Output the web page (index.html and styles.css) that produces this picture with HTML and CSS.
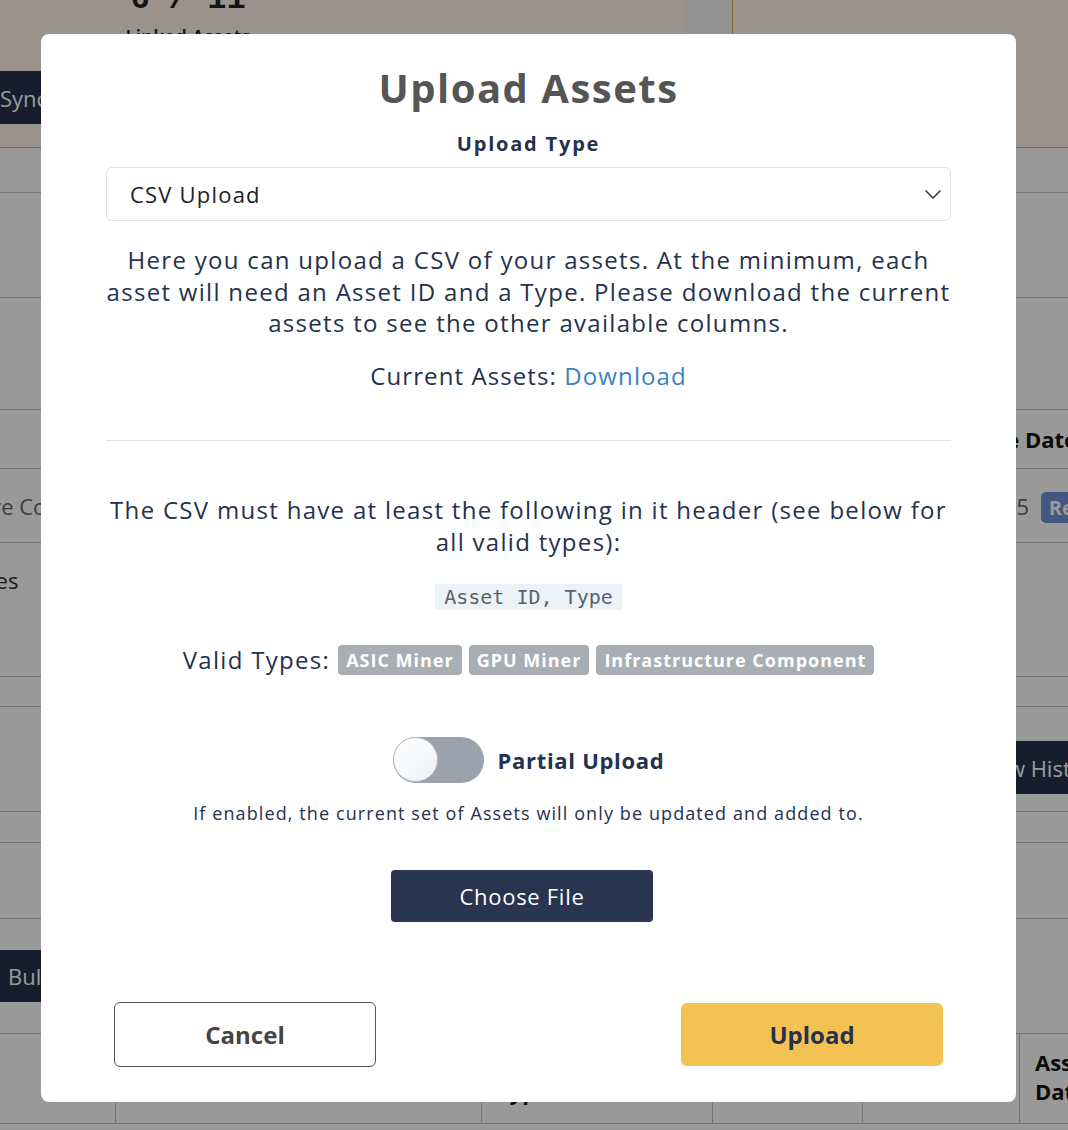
FILE: index.html
```html
<!DOCTYPE html>
<html lang="en">
<head>
  <meta charset="UTF-8">
  <meta name="viewport" content="width=device-width, initial-scale=1">
  <title>Assets - Upload</title>
  <link rel="stylesheet" href="styles.css">
</head>
<body>

  <!-- Page behind the modal -->
  <div class="page">
    <section class="summary">
      <div class="summary-left">
        <div class="stat">
          <div class="stat-value">6 / 11</div>
          <div class="stat-label">Linked Assets</div>
        </div>
        <button class="btn-dark btn-sync">Sync Assets</button>
      </div>
      <div class="summary-divider"></div>
      <div class="summary-right"></div>
    </section>

    <div class="rows">
      <div class="row h45"></div>
      <div class="row h105"></div>
      <div class="row h112"></div>
      <div class="row h59 head"><span class="cell-left"></span><span class="cell-right date-head">Due Date</span></div>
      <div class="row h74"><span class="cell-left muted shift-co">Hardware Component</span><span class="cell-right muted date-cell">2025 <span class="tag-blue">Ready</span></span></div>
      <div class="row h134 top"><span class="cell-left shift-es">Firmware Updates</span></div>
      <div class="row h30"></div>
      <div class="row h105"><span class="cell-left"></span><span class="cell-right"><button class="btn-dark btn-history">View History</button></span></div>
      <div class="row h31"></div>
      <div class="row h76"></div>
      <div class="row h115"><span class="cell-left"><button class="btn-dark btn-bulk">Bulk Edit</button></span></div>
      <div class="row table-head">
        <div class="col c1"></div>
        <div class="col c2">Asset ID</div>
        <div class="col c3">Asset<br>Type</div>
        <div class="col c4">Status</div>
        <div class="col c5">Location</div>
        <div class="col c6">Asset<br>Date</div>
      </div>
    </div>
  </div>

  <!-- Upload modal -->
  <div class="backdrop">
    <div class="modal">
      <h2 class="modal-title">Upload Assets</h2>

      <label class="field-label" for="uploadType">Upload Type</label>
      <div class="select" id="uploadType">
        <span>CSV Upload</span>
        <svg width="18" height="12" viewBox="0 0 18 12"><path d="M1.5 2.5 L9 10 L16.5 2.5" fill="none" stroke="#333" stroke-width="1.5"/></svg>
      </div>

      <p class="text intro">Here you can upload a CSV of your assets. At the minimum, each asset will need an Asset ID and a Type. Please download the current assets to see the other available columns.</p>
      <p class="text current">Current Assets: <a href="#" class="link">Download</a></p>

      <hr class="divider">

      <p class="text header-info">The CSV must have at least the following in it header (see below for all valid types):</p>
      <div class="code-line"><code>Asset ID, Type</code></div>

      <div class="types">
        <span class="text">Valid Types:</span>
        <span class="badge">ASIC Miner</span>
        <span class="badge">GPU Miner</span>
        <span class="badge">Infrastructure Component</span>
      </div>

      <div class="toggle-row">
        <span class="toggle"><span class="knob"></span></span>
        <span class="toggle-label">Partial Upload</span>
      </div>
      <p class="hint">If enabled, the current set of Assets will only be updated and added to.</p>

      <div class="file-row">
        <button class="btn-file">Choose File</button>
      </div>

      <div class="modal-footer">
        <button class="btn-cancel">Cancel</button>
        <button class="btn-upload">Upload</button>
      </div>
    </div>
  </div>

</body>
</html>
```

FILE: styles.css
```css
/* Global */
body {
  margin: 0;
  font-family: 'Open Sans', 'DejaVu Sans', sans-serif;
  background: #fff;
  color: #24314f;
  overflow: hidden;
}
button {
  font-family: inherit;
  cursor: pointer;
}

/* Page behind the modal */
.page {
  height: 1130px;
  overflow: hidden;
}
.summary {
  display: flex;
  height: 147px;
  background: #fff5ea;
  border-bottom: 1px solid #f0a03c;
}
.summary-left {
  width: 685px;
}
.stat {
  margin: -17px 0 0 116px;
  width: 144px;
  text-align: center;
}
.stat-value {
  font-family: 'Liberation Mono', monospace;
  font-weight: bold;
  font-size: 32px;
  line-height: 34px;
  color: #222;
}
.stat-label {
  margin-top: 5px;
  font-weight: 600;
  font-size: 19px;
  line-height: 30px;
  color: #222;
  white-space: nowrap;
}
.summary-divider {
  width: 47px;
  background: #f3f3f3;
  border-right: 1px solid #f0a03c;
}
.btn-dark {
  background: #25324e;
  color: #fff;
  border: none;
  border-radius: 4px;
  font-size: 22px;
  padding: 0 18px;
  height: 53px;
  white-space: nowrap;
}
.btn-sync {
  margin: 19px 0 0 -18px;
}
.rows .row {
  display: flex;
  justify-content: space-between;
  align-items: center;
  border-bottom: 1px solid #c4c4c4;
  font-size: 22px;
  color: #333;
  box-sizing: border-box;
}
.row.top {
  align-items: flex-start;
  padding-top: 22px;
}
.row.head {
  font-weight: bold;
  color: #111;
}
.h30 { height: 30px; }
.h31 { height: 31px; }
.h45 { height: 45px; }
.h59 { height: 59px; }
.h74 { height: 74px; }
.h76 { height: 76px; }
.h105 { height: 105px; }
.h112 { height: 112px; }
.h115 { height: 115px; }
.h134 { height: 134px; }
.cell-left {
  white-space: nowrap;
}
.cell-right {
  white-space: nowrap;
}
.shift-co {
  margin-left: -88px;
}
.shift-es {
  margin-left: -170px;
}
.date-head {
  margin-right: -9px;
}
.date-cell {
  margin-right: -50px;
}
.muted {
  color: #666;
}
.tag-blue {
  background: #6f8fd6;
  color: #fff;
  font-weight: bold;
  border-radius: 5px;
  padding: 2px 8px;
  font-size: 20px;
  margin-left: 6px;
}
.btn-history {
  margin: 17px -54px 0 0;
}
.btn-bulk {
  margin-left: -10px;
  height: 52px;
}
.row.table-head {
  height: 90px;
  align-items: stretch;
  justify-content: flex-start;
  font-weight: bold;
  color: #111;
}
.col {
  flex-shrink: 0;
  box-sizing: border-box;
  border-right: 1px solid #c4c4c4;
  padding: 14px 15px 0;
  line-height: 29px;
}
.c1 { width: 116px; padding: 0; }
.c2 { width: 366px; }
.c3 { width: 231px; }
.c4 { width: 150px; }
.c5 { width: 157px; }
.c6 { border-right: none; }

/* Overlay + modal */
.backdrop {
  position: fixed;
  inset: 0;
  background: rgba(0, 0, 0, 0.4);
}
.modal {
  margin: 34px 0 0 41px;
  width: 975px;
  height: 1068px;
  box-sizing: border-box;
  padding: 30px 65px 0;
  background: #fff;
  border-radius: 8px;
  text-align: center;
  letter-spacing: 1.3px;
}
.modal-title {
  margin: 0;
  font-size: 40px;
  line-height: 48px;
  font-weight: bold;
  color: #555;
  letter-spacing: 1.5px;
}
.field-label {
  display: block;
  margin-top: 18px;
  font-size: 20px;
  line-height: 28px;
  font-weight: bold;
  letter-spacing: 1.8px;
}
.select {
  margin-top: 9px;
  height: 54px;
  box-sizing: border-box;
  border: 1px solid #dde3e8;
  border-radius: 6px;
  display: flex;
  align-items: center;
  justify-content: space-between;
  padding: 0 8px 0 23px;
  font-size: 22px;
  color: #222;
  letter-spacing: 1.2px;
}
.text {
  font-size: 24px;
  line-height: 31.5px;
  margin: 0;
}
.intro {
  margin: 23px -8px 0;
}
.current {
  margin-top: 21px;
  letter-spacing: 1.1px;
}
.link {
  color: #3b82c4;
  text-decoration: none;
}
.divider {
  border: none;
  border-top: 1px solid #e2e2e2;
  margin: 49px 0 0;
}
.header-info {
  margin: 53px -8px 0;
}
.code-line {
  margin-top: 27px;
}
.code-line code {
  display: inline-block;
  font-family: 'DejaVu Sans Mono', monospace;
  font-size: 20px;
  line-height: 26px;
  padding: 0 9px;
  background: #edf2f7;
  color: #5a6270;
  letter-spacing: 0;
}
.types {
  margin-top: 34px;
  display: flex;
  justify-content: center;
  align-items: center;
  gap: 7px;
}
.types .text {
  margin-right: 1px;
}
.badge {
  background: #a9aeb4;
  color: #fff;
  font-weight: bold;
  font-size: 18px;
  line-height: 30px;
  padding: 0 8px;
  border-radius: 4px;
  letter-spacing: 1px;
}
.toggle-row {
  margin-top: 61px;
  display: flex;
  justify-content: center;
  align-items: center;
  gap: 14px;
}
.toggle {
  width: 91px;
  height: 46px;
  border-radius: 23px;
  background: #9aa3ad;
  display: flex;
  align-items: center;
}
.knob {
  width: 45px;
  height: 45px;
  box-sizing: border-box;
  border-radius: 50%;
  border: 1px solid #b9bec4;
  background: linear-gradient(135deg, #ffffff, #eef2f6);
}
.toggle-label {
  font-size: 22px;
  font-weight: bold;
  letter-spacing: 0.7px;
}
.hint {
  margin: 18px 0 0;
  font-size: 18px;
  line-height: 24px;
  letter-spacing: 1.1px;
}
.file-row {
  margin-top: 45px;
}
.btn-file {
  width: 262px;
  height: 52px;
  background: #283450;
  color: #fff;
  border: none;
  border-radius: 4px;
  font-size: 22px;
  margin-left: -13px;
  letter-spacing: 0.7px;
}
.modal-footer {
  margin-top: 80px;
  padding: 0 8px;
  display: flex;
  justify-content: space-between;
  align-items: center;
}
.btn-cancel {
  width: 262px;
  height: 65px;
  background: #fff;
  border: 1px solid #555;
  border-radius: 6px;
  font-size: 24px;
  font-weight: bold;
  color: #444;
  letter-spacing: 0;
}
.btn-upload {
  width: 262px;
  height: 63px;
  background: #f2c352;
  border: none;
  border-radius: 6px;
  font-size: 24px;
  font-weight: bold;
  color: #24314f;
  letter-spacing: 0;
}
```
